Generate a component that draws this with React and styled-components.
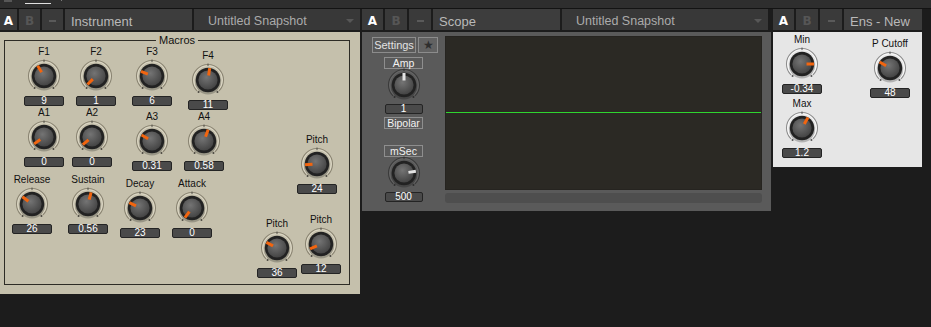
import React, { useId } from 'react';
import styled, { createGlobalStyle } from 'styled-components';

const GlobalStyle = createGlobalStyle`
  html, body { margin: 0; padding: 0; background: #1c1c1c; }
  body { font-family: "Liberation Sans", Arial, sans-serif; overflow: hidden; }
`;

const Page = styled.div`
  width: 931px;
  height: 327px;
  background: #1c1c1c;
  overflow: hidden;
`;

const TopStrip = styled.div`
  height: 8px;
  background: #2e2e2e;
  border-bottom: 1px solid #131313;
  display: flex;
  align-items: flex-start;
`;

const StripMark = styled.div`
  width: ${(p) => p.$w}px;
  height: ${(p) => p.$h}px;
  margin-left: ${(p) => p.$ml}px;
  margin-top: ${(p) => p.$mt || 0}px;
  background: ${(p) => p.$c};
`;

const DeviceRow = styled.div`
  display: flex;
  align-items: flex-start;
  gap: 2px;
`;

const Device = styled.div`
  width: ${(p) => p.$w}px;
  display: flex;
  flex-direction: column;
  gap: 2px;
`;

const Header = styled.div`
  display: flex;
  gap: 2px;
  height: 21px;
`;

const ToggleCell = styled.div`
  width: ${(p) => p.$w}px;
  background: #3a3a3a;
  display: flex;
  align-items: center;
  justify-content: center;
  padding-top: 2px;
  box-sizing: border-box;
  font-family: "DejaVu Sans", "Liberation Sans", sans-serif;
  font-weight: bold;
  font-size: 12px;
  color: ${(p) => (p.$active ? '#ffffff' : '#565656')};
`;

const Dash = styled.span`
  width: 7px;
  height: 2px;
  background: #5a5a5a;
`;

const NameCell = styled.div`
  width: ${(p) => (p.$w ? `${p.$w}px` : 'auto')};
  flex: ${(p) => (p.$w ? 'none' : '1')};
  background: #3d3d3d;
  color: #b9b9b9;
  font-size: 13px;
  display: flex;
  align-items: center;
  padding: 3px 0 0 6px;
  box-sizing: border-box;
  white-space: nowrap;
  overflow: hidden;
`;

const DropCell = styled.div`
  flex: 1;
  margin-right: ${(p) => p.$mr || 0}px;
  background: #383838;
  color: #ababab;
  font-size: 12.5px;
  display: flex;
  align-items: center;
  padding: 2px 0 0 14px;
  box-sizing: border-box;
  white-space: nowrap;
`;

const DropArrow = styled.span`
  margin-left: auto;
  margin-right: 6px;
  width: 0;
  height: 0;
  border-left: 4px solid transparent;
  border-right: 4px solid transparent;
  border-top: 4px solid #575757;
`;

const Body = styled.div`
  height: ${(p) => p.$h}px;
  background: ${(p) => p.$bg};
  position: relative;
  box-sizing: border-box;
`;

const InstrumentBody = styled(Body)`
  padding: 8px 0 0 4px;
`;

const Group = styled.div`
  position: relative;
  width: 346px;
  height: 245px;
  border: 1px solid #2e2c26;
  box-sizing: border-box;
`;

const Legend = styled.span`
  position: absolute;
  top: -7px;
  left: 50%;
  transform: translateX(-50%);
  padding: 0 3px;
  background: #c5c0ac;
  font-size: 11px;
  line-height: 12px;
  color: #111;
`;

const Widget = styled.div`
  position: absolute;
  width: 42px;
  display: flex;
  flex-direction: column;
  align-items: center;
`;

const KnobLabel = styled.div`
  height: 12px;
  line-height: 12px;
  font-size: 10px;
  color: #111;
  white-space: nowrap;
`;

const ValueBox = styled.div`
  width: ${(p) => p.$w || 40}px;
  height: 10px;
  margin-top: ${(p) => p.$mt ?? 2}px;
  box-sizing: border-box;
  background: #4a4a4a;
  border: 1px solid #242424;
  border-radius: 2px;
  color: #fff;
  font-size: 10px;
  line-height: 8px;
  text-align: center;
`;

const ScopeBody = styled(Body)`
  display: flex;
  gap: 7px;
  padding: 4px 9px 8px 10px;
`;

const SideCol = styled.div`
  width: 66px;
  display: flex;
  flex-direction: column;
  padding-top: 1px;
`;

const ButtonRow = styled.div`
  display: flex;
  gap: 2px;
`;

const SmallButton = styled.div`
  width: ${(p) => p.$w}px;
  height: 16px;
  box-sizing: border-box;
  border: 1px solid #8c8c8c;
  background: ${(p) => (p.$icon ? '#626262' : '#5a5a5a')};
  color: ${(p) => (p.$icon ? '#2e2e2e' : '#e2e2e2')};
  font-size: ${(p) => (p.$icon ? '12px' : '11px')};
  display: flex;
  align-items: center;
  justify-content: center;
`;

const Stack = styled.div`
  width: 39px;
  margin-left: 12px;
  display: flex;
  flex-direction: column;
  align-items: center;
`;

const OutlineTag = styled.div`
  width: 39px;
  height: 12px;
  margin-top: ${(p) => p.$mt}px;
  box-sizing: border-box;
  border: 1px solid #8e8e8e;
  color: #f2f2f2;
  font-size: 10.5px;
  line-height: 10px;
  text-align: center;
`;

const KnobSlot = styled.div`
  margin-top: -1px;
  height: 34px;
  display: flex;
`;

const ScreenArea = styled.div`
  flex: 1;
  display: flex;
  flex-direction: column;
  gap: 3px;
`;

const Screen = styled.div`
  height: 154px;
  background: #2b2924;
  border: 1px solid #262420;
  box-sizing: border-box;
  display: flex;
`;

const Track = styled.div`
  height: 10px;
  background: #4e4e4e;
  border-radius: 3px;
`;

const palettes = {
  beige: { outer: '#8a8472', inner: '#ddd8c6', dot: '#4a4740', tick: '#55524a', pointer: '#f2650f' },
  light: { outer: '#8c8c8c', inner: '#fafafa', dot: '#555', tick: '#555', pointer: '#f2650f' },
  dark: { outer: '#3a3a3a', inner: '#666666', dot: '#2e2e2e', tick: '#333', pointer: '#e4e4e4' },
};

function Knob({ angle, variant = 'beige', size = 36 }) {
  const id = 'g' + useId().replace(/[^a-zA-Z0-9]/g, '');
  const p = palettes[variant];
  const c = size / 2;
  const pt = (r, a) => [c + r * Math.sin((a * Math.PI) / 180), c - r * Math.cos((a * Math.PI) / 180)];
  const arc = (r) => {
    const [x1, y1] = pt(r, -135);
    const [x2, y2] = pt(r, 135);
    return `M${x1} ${y1} A${r} ${r} 0 1 1 ${x2} ${y2}`;
  };
  const [d1x, d1y] = pt(15.3, -142);
  const [d2x, d2y] = pt(15.3, 142);
  const [p1x, p1y] = pt(4.5, angle);
  const [p2x, p2y] = pt(12, angle);
  return (
    <svg width={size} height={size} viewBox={`0 0 ${size} ${size}`}>
      <defs>
        <radialGradient id={id} cx="42%" cy="36%" r="70%">
          <stop offset="0" stopColor="#747474" />
          <stop offset="1" stopColor="#404040" />
        </radialGradient>
      </defs>
      <path d={arc(15.5)} fill="none" stroke={p.outer} strokeWidth="1.1" />
      <path d={arc(14.4)} fill="none" stroke={p.inner} strokeWidth="1" />
      <line x1={c} y1={c - 16.5} x2={c} y2={c - 14} stroke={p.tick} strokeWidth="1" />
      <circle cx={d1x} cy={d1y} r="1" fill={p.dot} />
      <circle cx={d2x} cy={d2y} r="1" fill={p.dot} />
      <circle cx={c} cy={c + 1.5} r="13" fill="rgba(0,0,0,0.22)" />
      <circle cx={c} cy={c} r="12.2" fill="#222" />
      <circle cx={c} cy={c} r="9.6" fill={`url(#${id})`} />
      <line x1={p1x} y1={p1y} x2={p2x} y2={p2y} stroke={p.pointer} strokeWidth="3" />
    </svg>
  );
}

function KnobWidget({ label, value, left, top, angle, variant }) {
  return (
    <Widget style={{ left, top }}>
      <KnobLabel>{label}</KnobLabel>
      <Knob angle={angle} variant={variant} />
      <ValueBox>{value}</ValueBox>
    </Widget>
  );
}

// page coordinates: cx = knob centre x, top = label top y
const macros = [
  { label: 'F1', value: '9', cx: 44, top: 46, a: -32 },
  { label: 'F2', value: '1', cx: 96, top: 46, a: -135 },
  { label: 'F3', value: '6', cx: 152, top: 46, a: -67 },
  { label: 'F4', value: '11', cx: 208, top: 50, a: 8 },
  { label: 'A1', value: '0', cx: 44, top: 107, a: -125 },
  { label: 'A2', value: '0', cx: 92, top: 107, a: -130 },
  { label: 'A3', value: '0.31', cx: 152, top: 111, a: -60 },
  { label: 'A4', value: '0.58', cx: 204, top: 111, a: 20 },
  { label: 'Pitch', value: '24', cx: 317, top: 134, a: -94 },
  { label: 'Release', value: '26', cx: 32, top: 174, a: -53 },
  { label: 'Sustain', value: '0.56', cx: 88, top: 174, a: 15 },
  { label: 'Decay', value: '23', cx: 140, top: 178, a: -63 },
  { label: 'Attack', value: '0', cx: 192, top: 178, a: -144 },
  { label: 'Pitch', value: '36', cx: 277, top: 218, a: -62 },
  { label: 'Pitch', value: '12', cx: 321, top: 214, a: -114 },
];

const ensKnobs = [
  { label: 'Min', value: '-0.34', cx: 802, top: 34, a: 90 },
  { label: 'Max', value: '1.2', cx: 802, top: 98, a: 30 },
  { label: 'P Cutoff', value: '48', cx: 890, top: 38, a: -60 },
];

function DeviceHeader({ name, nameW, snapshot, aW = 21, bW = 22, dW = 22, dropMr }) {
  return (
    <Header>
      <ToggleCell $w={aW} $active>A</ToggleCell>
      <ToggleCell $w={bW}>B</ToggleCell>
      <ToggleCell $w={dW}>
        <Dash />
      </ToggleCell>
      <NameCell $w={nameW}>{name}</NameCell>
      {snapshot && (
        <DropCell $mr={dropMr}>
          {snapshot}
          <DropArrow />
        </DropCell>
      )}
    </Header>
  );
}

export default function App() {
  return (
    <Page>
      <GlobalStyle />
      <TopStrip>
        <StripMark $w={8} $h={2} $ml={4} $c="#575757" />
        <StripMark $w={26} $h={1} $ml={13} $mt={3} $c="#e0e0e0" />
        <StripMark $w={1} $h={1} $ml={10} $c="#7a7a7a" />
      </TopStrip>
      <DeviceRow>
        <Device $w={360}>
          <DeviceHeader name="Instrument" nameW={127} snapshot="Untitled Snapshot" aW={17} bW={21} dW={21} />
          <InstrumentBody $h={262} $bg="#c5c0ac">
            <Group>
              <Legend>Macros</Legend>
              {macros.map((m, i) => (
                <KnobWidget
                  key={i}
                  label={m.label}
                  value={m.value}
                  angle={m.a}
                  left={m.cx - 21 - 5}
                  top={m.top - 41}
                  variant="beige"
                />
              ))}
            </Group>
          </InstrumentBody>
        </Device>

        <Device $w={409}>
          <DeviceHeader name="Scope" nameW={127} snapshot="Untitled Snapshot" dropMr={3} />
          <ScopeBody $h={179} $bg="#5a5a5a">
            <SideCol>
              <ButtonRow>
                <SmallButton $w={44}>Settings</SmallButton>
                <SmallButton $w={20} $icon>★</SmallButton>
              </ButtonRow>
              <Stack>
                <OutlineTag $mt={4}>Amp</OutlineTag>
                <KnobSlot>
                  <Knob angle={0} variant="dark" size={34} />
                </KnobSlot>
                <ValueBox $w={38}>1</ValueBox>
                <OutlineTag $mt={3}>Bipolar</OutlineTag>
                <OutlineTag $mt={16}>mSec</OutlineTag>
                <KnobSlot>
                  <Knob angle={82} variant="dark" size={34} />
                </KnobSlot>
                <ValueBox $w={38}>500</ValueBox>
              </Stack>
            </SideCol>
            <ScreenArea>
              <Screen>
                <svg width="100%" height="100%" preserveAspectRatio="none" viewBox="0 0 316 152">
                  <line x1="0" y1="75.5" x2="316" y2="75.5" stroke="#2fd62f" strokeWidth="1" />
                </svg>
              </Screen>
              <Track />
            </ScreenArea>
          </ScopeBody>
        </Device>

        <Device $w={149}>
          <DeviceHeader name="Ens - New" />
          <Body $h={135} $bg="#e6e6e6">
            {ensKnobs.map((m, i) => (
              <KnobWidget
                key={i}
                label={m.label}
                value={m.value}
                angle={m.a}
                left={m.cx - 21 - 773}
                top={m.top - 32}
                variant="light"
              />
            ))}
          </Body>
        </Device>
      </DeviceRow>
    </Page>
  );
}
